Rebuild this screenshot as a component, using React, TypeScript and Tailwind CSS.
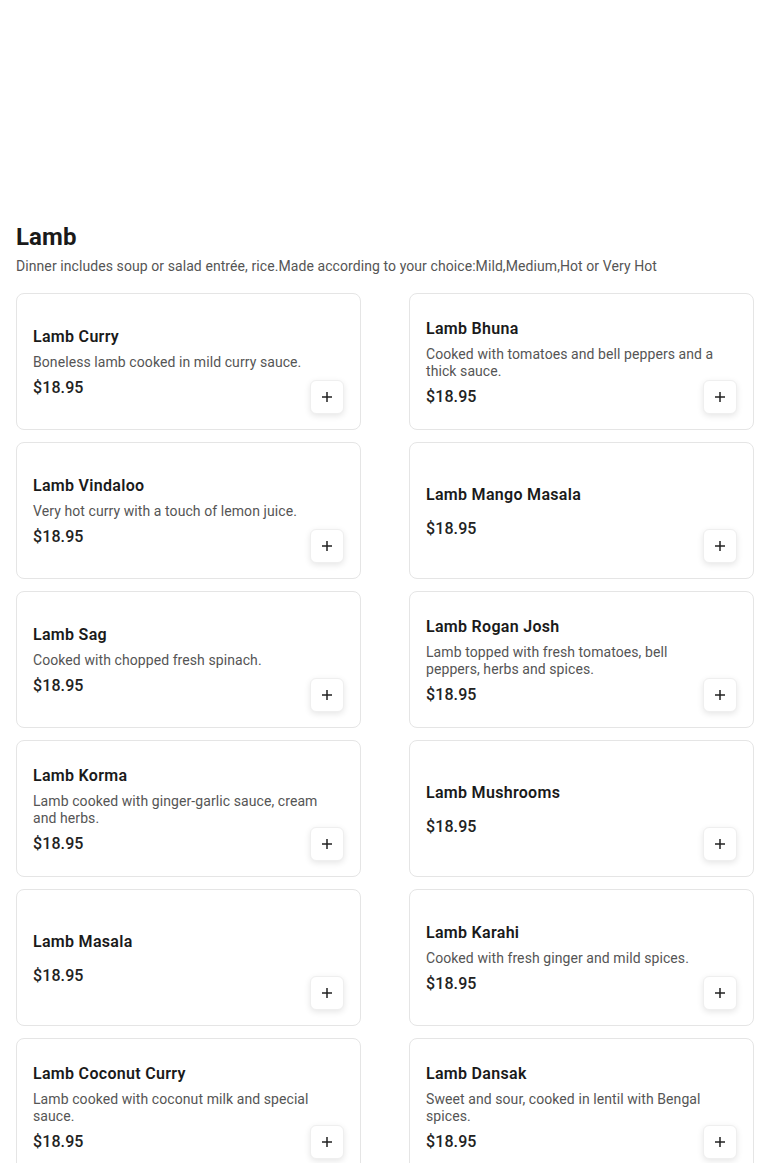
import React from "react";

type Item = { name: string; desc: string };

const items: Item[] = [
  { name: "Lamb Curry", desc: "Boneless lamb cooked in mild curry sauce." },
  { name: "Lamb Bhuna", desc: "Cooked with tomatoes and bell peppers and a thick sauce." },
  { name: "Lamb Vindaloo", desc: "Very hot curry with a touch of lemon juice." },
  { name: "Lamb Mango Masala", desc: "" },
  { name: "Lamb Sag", desc: "Cooked with chopped fresh spinach." },
  { name: "Lamb Rogan Josh", desc: "Lamb topped with fresh tomatoes, bell peppers, herbs and spices." },
  { name: "Lamb Korma", desc: "Lamb cooked with ginger-garlic sauce, cream and herbs." },
  { name: "Lamb Mushrooms", desc: "" },
  { name: "Lamb Masala", desc: "" },
  { name: "Lamb Karahi", desc: "Cooked with fresh ginger and mild spices." },
  { name: "Lamb Coconut Curry", desc: "Lamb cooked with coconut milk and special sauce." },
  { name: "Lamb Dansak", desc: "Sweet and sour, cooked in lentil with Bengal spices." },
];

function Card({ item }: { item: Item }) {
  return (
    <div className="relative h-[137px] rounded-lg border border-[#e5e5e5] bg-white pl-4 pr-8 flex items-center">
      <div className="w-full flex flex-col pt-px">
        <div className="text-[16px] leading-[19px] font-semibold tracking-[0.3px] text-[#1a1a1a] mb-2">{item.name}</div>
        <div className="text-[14px] leading-[17px] tracking-[0.08px] text-[#555555] mb-[7px]">{item.desc}</div>
        <div className="text-[16px] leading-[19px] font-medium tracking-[0.1px] text-[#222222]">$18.95</div>
      </div>
      <button className="absolute right-4 bottom-[15px] w-[34px] h-[34px] rounded-md bg-white border border-[#efefef] shadow-[0_2px_6px_rgba(0,0,0,0.1)] flex items-center justify-center">
        <svg width="10" height="10" viewBox="0 0 10 10" fill="none">
          <path d="M5 0v10M0 5h10" stroke="#222" strokeWidth="1.5" />
        </svg>
      </button>
    </div>
  );
}

export default function App() {
  return (
    <div className="bg-white min-h-screen" style={{ fontFamily: "Roboto, 'Noto Sans', Arial, sans-serif" }}>
      <div className="h-[221px]" />
      <div className="px-4">
        <h2 className="text-[24px] leading-[32px] font-bold tracking-[0.1px] text-[#1a1a1a]">Lamb</h2>
        <p className="text-[14px] leading-[20px] tracking-[0.08px] text-[#555555] mt-[3px]">
          Dinner includes soup or salad entrée, rice.Made according to your choice:Mild,Medium,Hot or Very Hot
        </p>
        <div className="grid grid-cols-2 gap-x-12 gap-y-3 mt-[17px] pb-6">
          {items.map((it) => (
            <Card key={it.name} item={it} />
          ))}
        </div>
      </div>
    </div>
  );
}
